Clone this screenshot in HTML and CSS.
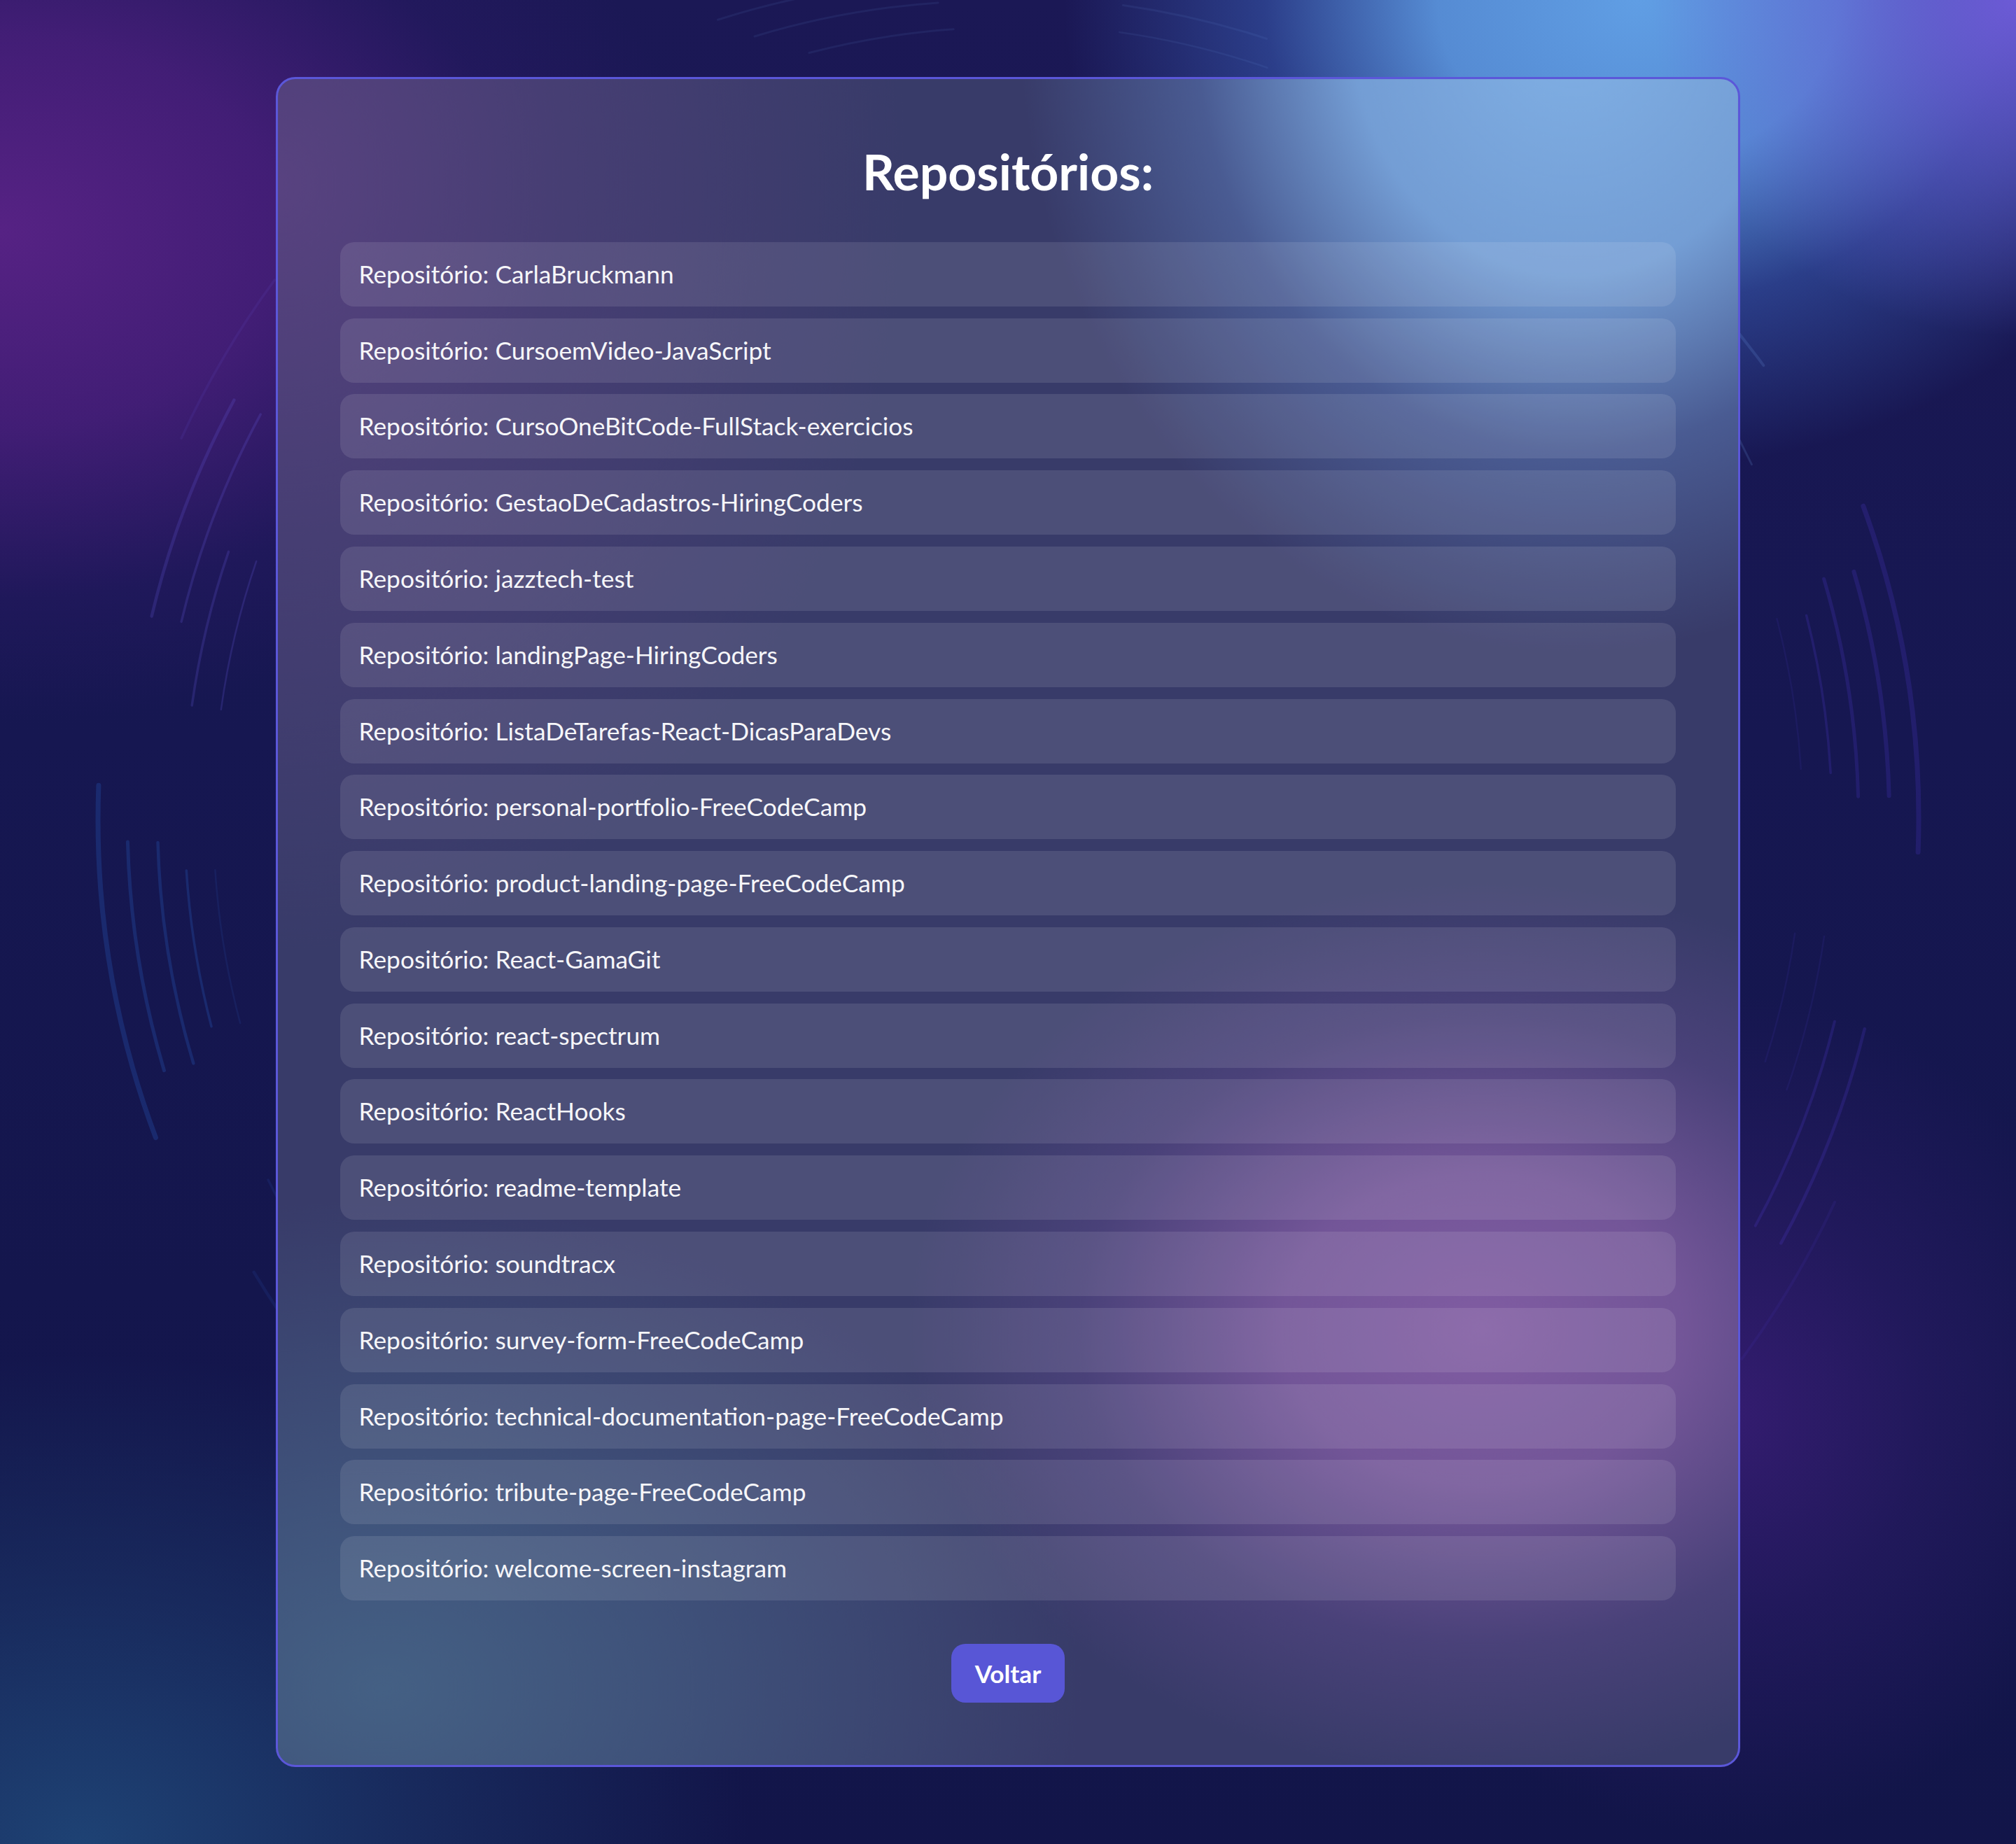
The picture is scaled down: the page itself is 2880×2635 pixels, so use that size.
FILE: index.html
```html
<!DOCTYPE html>
<html lang="pt-BR">
<head>
<meta charset="utf-8">
<title>Repositórios</title>
<link rel="stylesheet" href="styles.css">
</head>
<body>
<svg class="rings" viewBox="0 0 2880 2635" preserveAspectRatio="none" aria-hidden="true">
  <g class="ring-blue">
    <path class="w7" d="M222.4 1625.6 A1301 1301 0 0 1 140.9 1122.3"/>
    <path class="w5" d="M234.5 1529.7 A1259 1259 0 0 1 182.4 1203.0"/>
    <path class="w45" d="M276.3 1519.4 A1216 1216 0 0 1 225.5 1203.9"/>
    <path class="w35" d="M302.0 1466.7 A1177 1177 0 0 1 266.3 1243.9"/>
    <path class="w25 faint" d="M343.2 1462.1 A1136 1136 0 0 1 307.4 1243.3"/>
    <path class="w35 faint" d="M539.4 1926.6 A1177 1177 0 0 1 383.1 1686.0"/>
    <path class="w45 faint" d="M536.1 2043.9 A1258 1258 0 0 1 362.7 1817.9"/>
  </g>
  <g class="ring-violet">
    <path class="w45" d="M216.7 880.6 A1258 1258 0 0 1 334.4 571.7"/>
    <path class="w35" d="M259.1 888.4 A1215 1215 0 0 1 372.2 592.1"/>
    <path class="w35" d="M274.2 1008.1 A1178 1178 0 0 1 326.5 788.4"/>
    <path class="w25" d="M315.8 1013.9 A1136 1136 0 0 1 366.2 802.0"/>
    <path class="w35 faint" d="M259.0 626.4 A1301 1301 0 0 1 392.5 399.8"/>
  </g>
  <g class="ring-indigo">
    <path class="w7" d="M2661.8 723.2 A1300 1300 0 0 1 2740.1 1217.6"/>
    <path class="w6" d="M2648.4 816.9 A1258 1258 0 0 1 2698.6 1137.1"/>
    <path class="w5" d="M2605.6 827.2 A1214 1214 0 0 1 2654.6 1138.2"/>
    <path class="w35" d="M2580.6 879.5 A1176 1176 0 0 1 2615.2 1104.4"/>
    <path class="w25 faint" d="M2538.4 884.2 A1134 1134 0 0 1 2572.8 1098.8"/>
    <path class="w45" d="M2663.7 1470.3 A1259 1259 0 0 1 2544.3 1776.5"/>
    <path class="w4" d="M2620.9 1459.8 A1215 1215 0 0 1 2507.7 1751.6"/>
    <path class="w25 faint" d="M2606.0 1337.9 A1177 1177 0 0 1 2552.5 1557.1"/>
    <path class="w25 faint" d="M2564.1 1333.8 A1135 1135 0 0 1 2521.7 1517.0"/>
    <path class="w4 faint" d="M2621.1 1717.8 A1301 1301 0 0 1 2488.2 1942.0"/>
  </g>
  <g class="ring-sky">
    <path class="w4" d="M2396.0 378.0 A1258 1258 0 0 1 2519.3 522.1"/>
    <path class="w3" d="M2427.3 529.5 A1176 1176 0 0 1 2502.4 663.7"/>
    <path class="w3 faint" d="M1155.9 75.5 A1131 1131 0 0 1 1362.1 41.8"/>
    <path class="w3 faint" d="M1078.0 52.0 A1175 1175 0 0 1 1340.0 4.0"/>
    <path class="w3 faint" d="M1025.4 28.3 A1215 1215 0 0 1 1190.0 -12.0"/>
    <path class="w3 faint" d="M1604.4 7.4 A1174 1174 0 0 1 1809.6 55.4"/>
    <path class="w25 faint" d="M1599.0 46.0 A1135 1135 0 0 1 1810.5 96.8"/>
  </g>
</svg>

<main class="card">
  <h1 class="title">Repositórios:</h1>
  <ul class="repo-list">
    <li class="repo">Repositório: CarlaBruckmann</li>
    <li class="repo">Repositório: CursoemVideo-JavaScript</li>
    <li class="repo">Repositório: CursoOneBitCode-FullStack-exercicios</li>
    <li class="repo">Repositório: GestaoDeCadastros-HiringCoders</li>
    <li class="repo">Repositório: jazztech-test</li>
    <li class="repo">Repositório: landingPage-HiringCoders</li>
    <li class="repo">Repositório: ListaDeTarefas-React-DicasParaDevs</li>
    <li class="repo">Repositório: personal-portfolio-FreeCodeCamp</li>
    <li class="repo">Repositório: product-landing-page-FreeCodeCamp</li>
    <li class="repo">Repositório: React-GamaGit</li>
    <li class="repo">Repositório: react-spectrum</li>
    <li class="repo">Repositório: ReactHooks</li>
    <li class="repo">Repositório: readme-template</li>
    <li class="repo">Repositório: soundtracx</li>
    <li class="repo">Repositório: survey-form-FreeCodeCamp</li>
    <li class="repo">Repositório: technical-documentation-page-FreeCodeCamp</li>
    <li class="repo">Repositório: tribute-page-FreeCodeCamp</li>
    <li class="repo">Repositório: welcome-screen-instagram</li>
  </ul>
  <button class="back" type="button">Voltar</button>
</main>
</body>
</html>
```

FILE: styles.css
```css
* {
  box-sizing: border-box;
}

html,
body {
  margin: 0;
  padding: 0;
}

body {
  position: relative;
  min-height: 100vh;
  overflow: hidden;
  display: flex;
  align-items: center;
  justify-content: center;
  font-family: Lato, "Open Sans", "Liberation Sans", sans-serif;
  color: #f6f6f9;
  background:
    radial-gradient(ellipse 520px 480px at 2880px 0px, rgba(112, 92, 218, 0.95) 0%, rgba(105, 95, 215, 0.5) 50%, rgba(105, 95, 215, 0) 100%),
    radial-gradient(ellipse 820px 670px at 2340px 0px, rgba(96, 158, 228, 1) 0%, rgba(92, 152, 225, 0.9) 35%, rgba(60, 100, 190, 0.5) 65%, rgba(30, 40, 120, 0) 100%),
    radial-gradient(ellipse 1000px 700px at 0px 330px, rgba(86, 34, 132, 1) 0%, rgba(76, 31, 126, 0.8) 40%, rgba(50, 26, 110, 0.3) 75%, rgba(30, 20, 90, 0) 100%),
    radial-gradient(ellipse 950px 700px at 120px 2635px, rgba(30, 66, 116, 1) 0%, rgba(28, 56, 106, 0.6) 50%, rgba(28, 56, 106, 0) 100%),
    radial-gradient(ellipse 560px 600px at 2470px 2020px, rgba(52, 28, 112, 1) 0%, rgba(46, 28, 106, 0.5) 50%, rgba(46, 28, 106, 0) 100%),
    linear-gradient(180deg, #1b1855 0%, #161751 40%, #121549 100%);
}

.rings {
  position: absolute;
  top: 0;
  left: 0;
  width: 2880px;
  height: 2635px;
  z-index: 0;
  pointer-events: none;
}

.rings path {
  fill: none;
  stroke-linecap: round;
}

.ring-blue path {
  stroke: rgba(40, 92, 192, 0.28);
}

.ring-violet path {
  stroke: rgba(96, 84, 210, 0.24);
}

.ring-indigo path {
  stroke: rgba(74, 54, 196, 0.24);
}

.ring-sky path {
  stroke: rgba(120, 170, 240, 0.16);
}

.rings .faint {
  opacity: 0.5;
}

.w7 { stroke-width: 7; }
.w6 { stroke-width: 6; }
.w5 { stroke-width: 5; }
.w45 { stroke-width: 4.5; }
.w4 { stroke-width: 4; }
.w35 { stroke-width: 3.5; }
.w3 { stroke-width: 3; }
.w25 { stroke-width: 2.5; }

.card {
  position: relative;
  z-index: 1;
  width: 2092px;
  padding: 89px;
  border: 3px solid #5b57d9;
  border-radius: 28px;
  display: flex;
  flex-direction: column;
  align-items: center;
  background:
    radial-gradient(ellipse 790px 900px at 1850px -80px, rgba(128, 176, 229, 1) 0%, rgba(122, 168, 224, 0.9) 40%, rgba(98, 136, 204, 0.42) 68%, rgba(80, 100, 170, 0) 100%),
    radial-gradient(ellipse 820px 640px at 1720px 1787px, rgba(128, 92, 162, 1) 0%, rgba(125, 90, 160, 0.85) 35%, rgba(100, 75, 145, 0.4) 70%, rgba(100, 75, 145, 0) 100%),
    radial-gradient(ellipse 1000px 700px at 150px 2300px, rgba(68, 96, 132, 1) 0%, rgba(66, 92, 130, 0.7) 40%, rgba(66, 92, 130, 0) 100%),
    radial-gradient(ellipse 900px 1100px at 0px 150px, rgba(88, 66, 128, 1) 0%, rgba(80, 64, 122, 0.6) 45%, rgba(80, 64, 122, 0) 100%),
    #383b69;
}

.title {
  margin: 0 0 59.5px;
  font-size: 71.5px;
  font-weight: 700;
  line-height: 84.5px;
  color: #ffffff;
  text-align: center;
}

.repo-list {
  list-style: none;
  margin: 0;
  padding: 0;
  width: 100%;
  display: flex;
  flex-direction: column;
  gap: 16.8px;
}

.repo {
  padding: 25px 26.5px;
  font-size: 35.3px;
  line-height: 42px;
  border-radius: 20px;
  background: rgba(255, 255, 255, 0.1);
  color: #f6f6f9;
}

.back {
  margin-top: 62px;
  padding: 21px 34px;
  font-family: Lato, "Open Sans", "Liberation Sans", sans-serif;
  font-size: 35.2px;
  font-weight: 700;
  line-height: 42px;
  color: #ffffff;
  background: #5856d6;
  border: none;
  border-radius: 20px;
}
```
